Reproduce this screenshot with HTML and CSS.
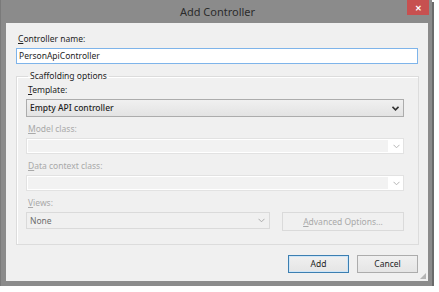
FILE: index.html
```html
<!DOCTYPE html>
<html lang="en">
<head>
    <meta charset="UTF-8">
    <title>Add Controller</title>
    <link rel="stylesheet" href="styles.css">
</head>
<body>
    <div class="window">
        <div class="titlebar">
            <span class="title">Add Controller</span>
            <span class="close">&#x2715;</span>
        </div>

        <div class="client">
            <!-- controller name -->
            <label class="label name-label"><u>C</u>ontroller name:</label>
            <div class="textbox">PersonApiController</div>

            <!-- scaffolding group -->
            <fieldset class="group">
                <legend>Scaffolding options</legend>

                <label class="label"><u>T</u>emplate:</label>
                <div class="combo">
                    <span>Empty API controller</span>
                    <svg class="arrow" width="7" height="5" viewBox="0 0 7 5"><path d="M0.5 0.8 L3.5 3.8 L6.5 0.8" fill="none" stroke="#333" stroke-width="1.6"/></svg>
                </div>

                <label class="label disabled"><u>M</u>odel class:</label>
                <div class="combo off">
                    <span class="field"></span>
                    <span class="drop"><svg width="7" height="5" viewBox="0 0 7 5"><path d="M0.5 0.8 L3.5 3.8 L6.5 0.8" fill="none" stroke="#b5b5b5" stroke-width="1"/></svg></span>
                </div>

                <label class="label disabled"><u>D</u>ata context class:</label>
                <div class="combo off">
                    <span class="field"></span>
                    <span class="drop"><svg width="7" height="5" viewBox="0 0 7 5"><path d="M0.5 0.8 L3.5 3.8 L6.5 0.8" fill="none" stroke="#b5b5b5" stroke-width="1"/></svg></span>
                </div>

                <label class="label disabled views-label"><u>V</u>iews:</label>
                <div class="views-row">
                    <div class="combo views">
                        <span>None</span>
                        <svg class="arrow" width="7" height="5" viewBox="0 0 7 5"><path d="M0.5 0.8 L3.5 3.8 L6.5 0.8" fill="none" stroke="#aaa" stroke-width="1"/></svg>
                    </div>
                    <div class="btn adv"><u>A</u>dvanced Options...</div>
                </div>
            </fieldset>

            <div class="buttons">
                <div class="btn default">Add</div>
                <div class="btn">Cancel</div>
            </div>
            <div class="grip"></div>
        </div>
    </div>
</body>
</html>
```

FILE: styles.css
```css
body {
    margin: 0;
    background: #ffffff;
    font-family: "Noto Sans", "Open Sans", sans-serif;
}
u {
    text-decoration: underline;
    text-underline-offset: 1px;
}
.window {
    width: 432px;
    height: 286px;
    background: #8b8b8b;
    box-shadow: 2px 2px 0 #6a6a6a;
    border-left: 1px solid #7a7a7a;
    box-sizing: border-box;
    display: flex;
    flex-direction: column;
}
.titlebar {
    position: relative;
    height: 23px;
    display: flex;
    align-items: center;
    justify-content: center;
}
.title {
    font-size: 11px;
    color: #2b2b2b;
    margin-left: 2px;
}
.close {
    position: absolute;
    right: 3px;
    top: 0;
    width: 22px;
    height: 15px;
    background: #c75050;
    color: #fff;
    font-size: 8px;
    font-weight: bold;
    display: flex;
    align-items: center;
    justify-content: center;
}
.client {
    position: relative;
    flex: 1;
    margin: 0 4px 5px 5px;
    background: #f0f0f0;
    padding: 10px 10px 0 10px;
    display: flex;
    flex-direction: column;
    font-size: 8.5px;
    line-height: 12px;
    color: #1e1e1e;
}
.label {
    display: block;
    margin: 0 0 3px 2px;
}
.disabled {
    color: #a9a9a9;
}
.textbox {
    height: 16px;
    border: 1px solid #7eb4ea;
    background: #fff;
    box-sizing: border-box;
    padding-left: 2px;
    line-height: 14px;
}
.group {
    margin: 6px 0 0 0;
    padding: 0 14px 13px 9px;
    border: 1px solid #dcdcdc;
    box-shadow: inset 1px 1px 0 #fff;
    width: 403px;
    box-sizing: border-box;
}
.group legend {
    padding: 0 2px;
    margin-left: 2px;
}
.group .label {
    margin-top: 2px;
}
.group .views-label {
    margin-top: 3px;
}
.combo {
    height: 18px;
    box-sizing: border-box;
    border: 1px solid #acacac;
    background: linear-gradient(#f0f0f0, #e3e3e3);
    display: flex;
    align-items: center;
    justify-content: space-between;
    padding: 0 4px 0 3px;
    margin-bottom: 6px;
    font-weight: 500;
}
.combo.off {
    background: #fff;
    border: 1px solid #e2e2e2;
    padding: 0;
    height: 16px;
    margin-bottom: 6px;
}
.combo.off .field {
    flex: 1;
    background: #f2f2f2;
    margin: 1px;
    height: 12px;
}
.combo.off .drop {
    width: 14px;
    display: flex;
    justify-content: center;
}
.views-row {
    display: flex;
    align-items: flex-start;
    gap: 12px;
}
.combo.views {
    width: 244px;
    background: #f0f0f0;
    border: 1px solid #dadada;
    color: #6d6d6d;
    font-weight: normal;
    height: 17px;
    margin-bottom: 0;
}
.btn {
    height: 18px;
    box-sizing: border-box;
    border: 1px solid #acacac;
    background: linear-gradient(#f0f0f0, #e5e5e5);
    display: flex;
    align-items: center;
    justify-content: center;
}
.btn.adv {
    width: 122px;
    height: 19px;
    background: #f0f0f0;
    border-color: #dadada;
    color: #a9a9a9;
}
.buttons {
    display: flex;
    justify-content: flex-end;
    gap: 8px;
    margin-top: 10px;
}
.buttons .btn {
    width: 61px;
}
.btn.default {
    border-color: #3c7fb1;
    box-shadow: inset 0 0 0 1px #cfe6f8;
}
.grip {
    position: absolute;
    right: 2px;
    bottom: 2px;
    width: 6px;
    height: 6px;
    background: radial-gradient(circle, #b0b0b0 0.7px, transparent 0.8px) 0 0 / 2px 2px;
    clip-path: polygon(100% 0, 100% 100%, 0 100%);
}
```
